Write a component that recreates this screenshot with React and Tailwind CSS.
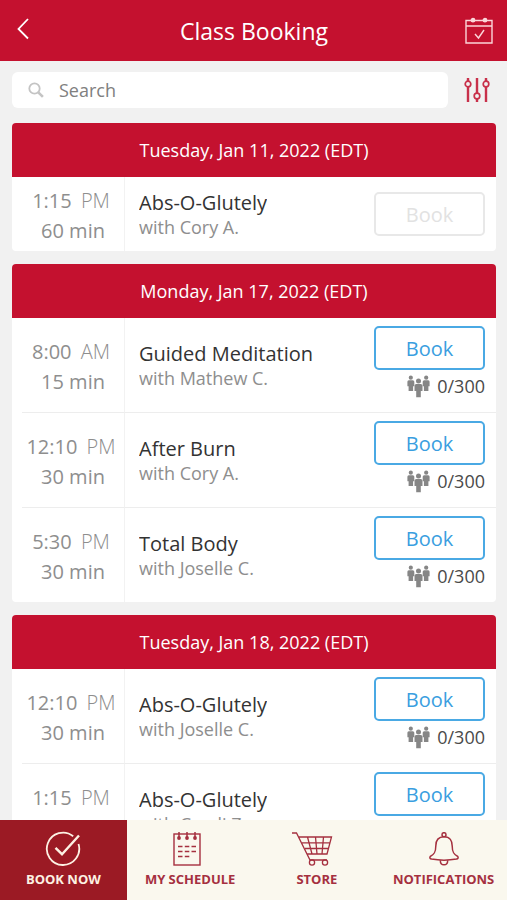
import { useState } from 'react';

const schedule = [
  {
    date: 'Tuesday, Jan 11, 2022 (EDT)',
    classes: [
      { time: '1:15', period: 'PM', duration: '60 min', name: 'Abs-O-Glutely', coach: 'Cory A.', disabled: true },
    ],
  },
  {
    date: 'Monday, Jan 17, 2022 (EDT)',
    classes: [
      { time: '8:00', period: 'AM', duration: '15 min', name: 'Guided Meditation', coach: 'Mathew C.', spots: '0/300' },
      { time: '12:10', period: 'PM', duration: '30 min', name: 'After Burn', coach: 'Cory A.', spots: '0/300' },
      { time: '5:30', period: 'PM', duration: '30 min', name: 'Total Body', coach: 'Joselle C.', spots: '0/300' },
    ],
  },
  {
    date: 'Tuesday, Jan 18, 2022 (EDT)',
    classes: [
      { time: '12:10', period: 'PM', duration: '30 min', name: 'Abs-O-Glutely', coach: 'Joselle C.', spots: '0/300' },
      { time: '1:15', period: 'PM', duration: '45 min', name: 'Abs-O-Glutely', coach: 'Cyndi Z.', spots: '0/300' },
    ],
  },
];

const tabs = [
  { id: 'book', label: 'BOOK NOW', icon: <CheckCircleIcon /> },
  { id: 'schedule', label: 'MY SCHEDULE', icon: <NotepadIcon /> },
  { id: 'store', label: 'STORE', icon: <CartIcon /> },
  { id: 'notifications', label: 'NOTIFICATIONS', icon: <BellIcon /> },
];

function BackIcon() {
  return (
    <svg width="12" height="22" viewBox="0 0 12 22" fill="none" stroke="currentColor" strokeWidth="1.8" aria-hidden="true">
      <path d="M11 1 1.5 11 11 20.5" />
    </svg>
  );
}

function CalendarCheckIcon() {
  return (
    <svg width="28" height="28" viewBox="0 0 28 28" fill="none" stroke="currentColor" strokeWidth="1.4" aria-hidden="true">
      <path d="M6 3.5H1V26h26V3.5h-5M10 3.5h8M1 9h26" />
      <circle cx="8" cy="3.2" r="1.7" fill="currentColor" />
      <circle cx="20" cy="3.2" r="1.7" fill="currentColor" />
      <path d="m10 17 3.500 4 5.500-8" />
    </svg>
  );
}

function SlidersIcon() {
  return (
    <svg width="26" height="26" viewBox="0 0 26 26" fill="none" stroke="currentColor" strokeWidth="2.4" aria-hidden="true">
      <path d="M4 1v3M4 10v15M13 1v15M13 22v3M22 1v3M22 10v15" />
      <circle cx="4" cy="7" r="2.8" strokeWidth="1.7" />
      <circle cx="13" cy="19" r="2.8" strokeWidth="1.7" />
      <circle cx="22" cy="7" r="2.8" strokeWidth="1.7" />
    </svg>
  );
}

function SearchIcon() {
  return (
    <svg width="16" height="16" viewBox="0 0 16 16" fill="none" stroke="currentColor" aria-hidden="true">
      <circle cx="6.5" cy="6.5" r="5.2" strokeWidth="1.8" />
      <path d="m10.3 10.3 4.6 4.6" strokeWidth="2.6" />
    </svg>
  );
}

function PeopleIcon() {
  return (
    <svg width="23" height="23" viewBox="0 0 23 23" fill="currentColor" aria-hidden="true">
      <circle cx="3.8" cy="2.7" r="2.1" />
      <path d="M1.8 5.200h4q1.500 0 1.500 1.500v4.600H6.100V16H1.600v-4.700H.4V6.700q0-1.500 1.400-1.500z" />
      <circle cx="19.200" cy="2.700" r="2.100" />
      <path d="M17.200 5.200h4q1.400 0 1.400 1.500v4.600h-1.200V16h-4.500v-4.700h-1.200V6.700q0-1.500 1.500-1.500z" />
      <circle cx="11.500" cy="6" r="2.500" />
      <path d="M9.400 8.900h4.200q1.900 0 1.900 1.900v5.200h-1.700v6.200H9.200V16H7.500v-5.200q0-1.900 1.900-1.900z" />
    </svg>
  );
}

function CheckCircleIcon() {
  return (
    <svg width="36" height="36" viewBox="0 0 36 36" fill="none" stroke="currentColor" strokeWidth="1.8" aria-hidden="true">
      <path d="M28.2 5.200A16.200 16.200 0 1 0 33.500 13" />
      <path d="m10.500 16.800 6.500 6.400L34 4.500" strokeWidth="2.400" />
    </svg>
  );
}

function NotepadIcon() {
  return (
    <svg width="34" height="34" viewBox="0 0 34 34" fill="none" stroke="currentColor" strokeWidth="1.4" aria-hidden="true">
      <rect x="1" y="2" width="26" height="31" />
      <path d="M6 0v6M14 0v6M22 0v6" strokeWidth="1.5" />
      <g fill="currentColor" stroke="none">
        <circle cx="6" cy="6" r="1.900" />
        <circle cx="14" cy="6" r="1.900" />
        <circle cx="22" cy="6" r="1.900" />
      </g>
      <path d="M5 14.500h4.500M11.800 14.500h4.500M18.500 14.500H23M5 19.500h4.500M11.800 19.500h4.500M18.500 19.500H23M5 24.500h4.500M11.800 24.500h4.500" strokeWidth="1.700" />
    </svg>
  );
}

function CartIcon() {
  return (
    <svg width="50" height="34" viewBox="0 0 50 34" fill="none" stroke="currentColor" strokeWidth="1.3" aria-hidden="true">
      <path d="M0 1h4.500L18 28h17M7 5h32.500L35 22H15.500M10 10.800h28M13 16.500h23.500M15.500 5l4.500 17M23.500 5l1.500 17M31.500 5l-1.500 17" />
      <circle cx="20" cy="30.500" r="2.600" />
      <circle cx="33" cy="30.500" r="2.600" />
    </svg>
  );
}

function BellIcon() {
  return (
    <svg width="30" height="34" viewBox="0 0 30 34" fill="none" stroke="currentColor" strokeWidth="1.5" aria-hidden="true">
      <circle cx="15" cy="2.700" r="2" />
      <path d="M15 4.700c-6 0-8.200 4-8.200 9.300 0 6-1.500 8.500-5.600 10.500-.8 1.500 0 2.300 1.300 2.600 7.500 1.300 17.500 1.300 25 0 1.300-.3 2.100-1.100 1.300-2.600-4.100-2-5.600-4.500-5.600-10.500 0-5.300-2.200-9.300-8.200-9.300z" />
      <path d="M11.300 28.200c0 6.200 7.400 6.200 7.400 0" />
    </svg>
  );
}

function ClassRow({ item, last }) {
  return (
    <li className="ml-[10px] flex">
      <div className={`flex w-[103px] shrink-0 flex-col items-center justify-center border-r border-r-[#f2f2f2] pt-1 text-xl/[30px] text-[#8e8e8e] ${last ? '' : 'border-b border-b-[#ededed]'}`}>
        <p className="pr-1 whitespace-nowrap">
          {item.time} <span className="ml-1 font-light">{item.period}</span>
        </p>
        <p>{item.duration}</p>
      </div>
      <div className={`flex min-w-0 grow items-center justify-between pr-[11px] pl-3.5 ${last ? '' : 'border-b border-[#ededed]'}`}>
        <div className="min-w-0 pt-0.5">
          <h3 className="truncate text-xl/[25px] text-[#333]">{item.name}</h3>
          <p className="truncate text-lg/[25px] text-[#8e8e8e]">with {item.coach}</p>
        </div>
        <div className={`shrink-0 ${item.spots ? 'pt-2 pb-[14px]' : 'py-[15px]'}`}>
          <button
            type="button"
            disabled={item.disabled}
            className="block h-11 w-[111px] rounded-[5px] border-2 border-[#4aa9e4] pt-0.5 text-xl text-[#3a9ee0] disabled:border-[#e8e8e8] disabled:text-[#e2e2e2]"
          >
            Book
          </button>
          {item.spots && (
            <p className="mt-1 flex items-center justify-end gap-[7px] text-lg/6 text-[#4a4a4a]">
              <span className="text-[#868686]"><PeopleIcon /></span>
              {item.spots}
            </p>
          )}
        </div>
      </div>
    </li>
  );
}

export default function App() {
  const [query, setQuery] = useState('');
  const [active, setActive] = useState('book');

  return (
    <div className="flex h-screen flex-col bg-[#f1f1f1] font-['Open_Sans',sans-serif]">
      {/* Header */}
      <header className="flex h-[61px] shrink-0 items-center justify-between bg-[#c4112f] pr-3.5 pl-[17px] text-white">
        <button type="button" aria-label="Back" className="flex w-[26px] pb-1">
          <BackIcon />
        </button>
        <h1 className="pt-0.5 text-[23px]">Class Booking</h1>
        <button type="button" aria-label="My bookings" className="text-[#fbd5d9]">
          <CalendarCheckIcon />
        </button>
      </header>

      {/* Search */}
      <div className="flex shrink-0 items-center gap-4 pt-[11px] pr-[17px] pb-[15px] pl-3">
        <label className="flex h-9 grow items-center gap-[15px] rounded-md bg-white pl-4 text-[#c4c4c4]">
          <SearchIcon />
          <input
            type="search"
            aria-label="Search"
            placeholder="Search"
            value={query}
            onChange={(e) => setQuery(e.target.value)}
            className="min-w-0 grow bg-transparent text-lg text-[#333] outline-none placeholder:text-[#808080]"
          />
        </label>
        <button type="button" aria-label="Filters" className="text-[#c8304a]">
          <SlidersIcon />
        </button>
      </div>

      {/* Class list */}
      <main className="min-h-0 grow space-y-[13px] overflow-hidden pr-[11px] pl-3">
        {schedule.map((day) => (
          <section key={day.date} className="overflow-hidden rounded-[4px] bg-white">
            <h2 className="bg-[#c4112f] text-center text-lg/[54px] text-white">{day.date}</h2>
            <ul>
              {day.classes.map((item, idx) => (
                <ClassRow key={item.time} item={item} last={idx === day.classes.length - 1} />
              ))}
            </ul>
          </section>
        ))}
      </main>

      {/* Bottom tabs */}
      <nav className="flex h-20 shrink-0 bg-[#faf8ee]">
        {tabs.map((tab) => (
          <button
            key={tab.id}
            type="button"
            onClick={() => setActive(tab.id)}
            className={`flex flex-1 basis-0 flex-col items-center text-[13px]/5 font-bold ${active === tab.id ? 'bg-[#9b1a24] text-[#fdf1e3]' : 'text-[#a5303f]'}`}
          >
            <span className="flex h-[49px] items-center pt-2">{tab.icon}</span>
            {tab.label}
          </button>
        ))}
      </nav>
    </div>
  );
}
